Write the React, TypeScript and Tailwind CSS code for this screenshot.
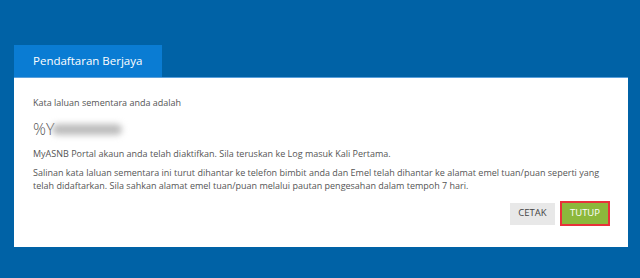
export default function App() {
  return (
    <div
      className="w-[640px] h-[278px] bg-[#0062a6] pt-[45px] pl-[14px] pr-[12px] text-[#555]"
      style={{ fontFamily: '"Open Sans", "Liberation Sans", sans-serif' }}
    >
      {/* tab */}
      <div className="w-[148px] h-[32px] bg-[#0a7cd3] flex items-center pl-[19px] text-white text-[11.5px]">
        Pendaftaran Berjaya
      </div>

      {/* panel */}
      <div className="bg-white border-t border-[#5aa0dc] h-[170px] pl-[19px] pr-[18px] pt-[18px]">
        <p className="text-[9px] leading-[13px]">Kata laluan sementara anda adalah</p>

        <div className="flex items-center mt-[12px] h-[16px]">
          <span className="text-[16px] leading-[16px] font-light text-[#555]">%Y</span>
          <span className="-ml-[2px] w-[70px] h-[11px] rounded-full bg-[#bdbdbd] blur-[3px]" />
        </div>

        <p className="text-[9px] leading-[13px] mt-[10px]">
          MyASNB Portal akaun anda telah diaktifkan. Sila teruskan ke Log masuk Kali Pertama.
        </p>
        <p className="text-[9px] leading-[13px] mt-[6px]">
          Salinan kata laluan sementara ini turut dihantar ke telefon bimbit anda dan Emel telah dihantar ke alamat emel tuan/puan seperti yang telah didaftarkan. Sila sahkan alamat emel tuan/puan melalui pautan pengesahan dalam tempoh 7 hari.
        </p>

        <div className="flex justify-end items-center gap-[5px] mt-[9px]">
          <button className="w-[45px] h-[22px] bg-[#e8e8e8] text-[#444] text-[9.5px]">CETAK</button>
          <button className="w-[50px] h-[25px] bg-[#8cb83c] text-white text-[9.5px] border-2 border-[#e8313a]">
            TUTUP
          </button>
        </div>
      </div>
    </div>
  );
}
